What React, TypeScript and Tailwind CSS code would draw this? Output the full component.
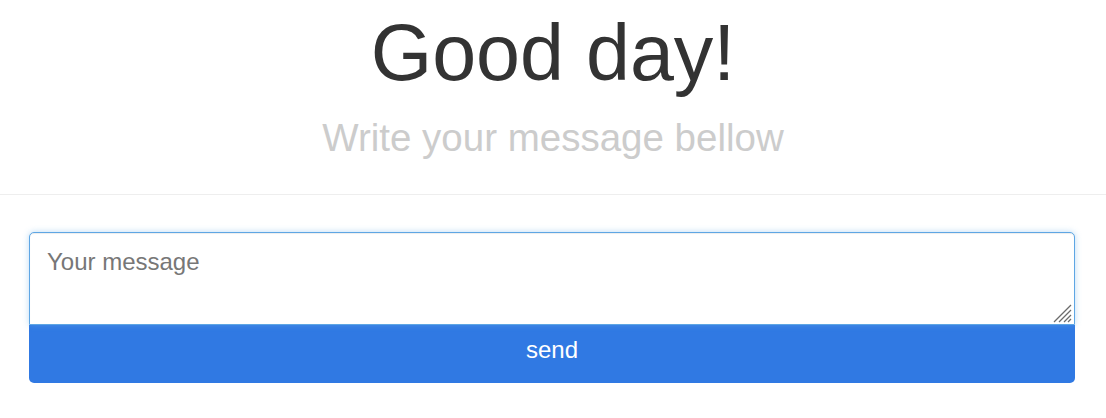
import { useState } from "react";

const App: React.FC = () => {
  const [message, setMessage] = useState("");

  return (
    <div className="min-h-screen bg-white font-['Liberation_Sans',Arial,sans-serif]">
      {/* Cabecera */}
      <div className="border-b border-[#eeeeee] pt-[12px] pb-[36px] text-center">
        <h1 className="text-[79px] leading-none text-[#333333] mt-[1px]">Good day!</h1>
        <p className="mt-[27px] text-[38.5px] leading-none text-[#cccccc]">
          Write your message bellow
        </p>
      </div>

      {/* Formulario */}
      <div className="pl-[29px] pr-[31px] pt-[37px]">
        <div className="relative">
          <textarea
            className="block w-full h-[93px] resize-none rounded-t-[5px] border border-[#5ea6e4] bg-white px-[17px] py-[15px] text-[24px] leading-[1.2] text-[#555555] placeholder:text-[#777777] outline-none shadow-[inset_0_1px_1px_rgba(0,0,0,0.075),0_0_6px_rgba(102,175,233,0.45)]"
            placeholder="Your message"
            value={message}
            onChange={(e) => setMessage(e.target.value)}
          />
          {/* asa de redimensionar */}
          <svg
            className="pointer-events-none absolute right-[3px] bottom-[2px] w-[20px] h-[20px]"
            viewBox="0 0 20 20"
            stroke="#6b6b6b"
            strokeWidth={1.3}
          >
            <line x1="2" y1="19" x2="19" y2="2" />
            <line x1="7" y1="19" x2="19" y2="7" />
            <line x1="12" y1="19" x2="19" y2="12" />
            <line x1="16" y1="19" x2="19" y2="16" />
          </svg>
        </div>
        <button
          className="block w-full h-[58px] rounded-b-[5px] bg-[#3079e3] pb-[8px] text-[24px] text-white"
          onClick={() => setMessage("")}
        >
          send
        </button>
      </div>
    </div>
  );
};

export default App;
